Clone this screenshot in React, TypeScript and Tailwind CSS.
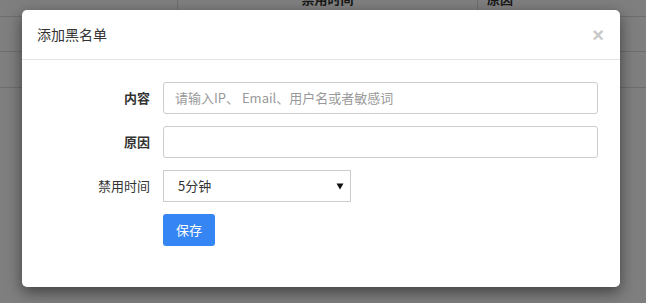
import React from "react";

const font = { fontFamily: '"Noto Sans CJK SC", "Liberation Sans", sans-serif' };

export default function App() {
  return (
    <div className="relative h-[303px] w-[646px] overflow-hidden bg-white" style={font}>
      {/* background table */}
      <div className="-mt-[12px] flex flex-col text-[13px] text-[#333]">
        <div className="flex h-[29px] border-b border-[#ddd] font-bold">
          <div className="w-[178px] border-r border-[#ddd]" />
          <div className="flex w-[300px] items-end justify-center border-r border-[#ddd] pb-[11px] leading-none">禁用时间</div>
          <div className="flex flex-1 items-end pb-[11px] pl-[9px] leading-none">原因</div>
        </div>
        <div className="h-[35px] border-b border-[#ddd]" />
        <div className="h-[36px] border-b border-[#ddd]" />
      </div>
      {/* overlay */}
      <div className="absolute inset-0 bg-black/50" />
      {/* modal */}
      <div className="absolute left-[22px] top-[10px] flex h-[277px] w-[598px] flex-col rounded-[5px] bg-white shadow-[0_5px_15px_rgba(0,0,0,0.5)]">
        <div className="flex h-[50px] items-center justify-between border-b border-[#e5e5e5] pl-[15px] pr-[16px]">
          <span className="text-[14px] text-[#333]">添加黑名单</span>
          <span className="text-[20px] font-bold leading-none text-[#c8c8c8]" style={{ fontFamily: '"Liberation Sans", sans-serif' }}>×</span>
        </div>
        <div className="flex flex-col gap-[12px] pt-[22px]">
          <div className="flex items-center">
            <label className="w-[128px] text-right text-[13px] font-bold text-[#333]">内容</label>
            <div className="ml-[13px] flex h-[32px] w-[435px] items-center rounded-[3px] border border-[#ccc] px-[11px] text-[13px] text-[#999]">
              请输入IP、 Email、用户名或者敏感词
            </div>
          </div>
          <div className="flex items-center">
            <label className="w-[128px] text-right text-[13px] font-bold text-[#333]">原因</label>
            <div className="ml-[13px] h-[32px] w-[435px] rounded-[3px] border border-[#ccc]" />
          </div>
          <div className="flex items-center">
            <label className="w-[128px] text-right text-[13px] text-[#333]">禁用时间</label>
            <div className="ml-[13px] flex h-[32px] w-[188px] items-center justify-between border border-[#ccc] pl-[14px] pr-[6px] text-[13px] text-[#333]">
              <span>5分钟</span>
              <svg width="8" height="8" viewBox="0 0 8 8"><path d="M0.5 1.5 L7.5 1.5 L4 7.5 Z" fill="#111" /></svg>
            </div>
          </div>
          <div className="flex">
            <button className="ml-[141px] flex h-[32px] w-[52px] items-center justify-center rounded-[3px] bg-[#3586f4] text-[13px] text-white">保存</button>
          </div>
        </div>
      </div>
    </div>
  );
}
